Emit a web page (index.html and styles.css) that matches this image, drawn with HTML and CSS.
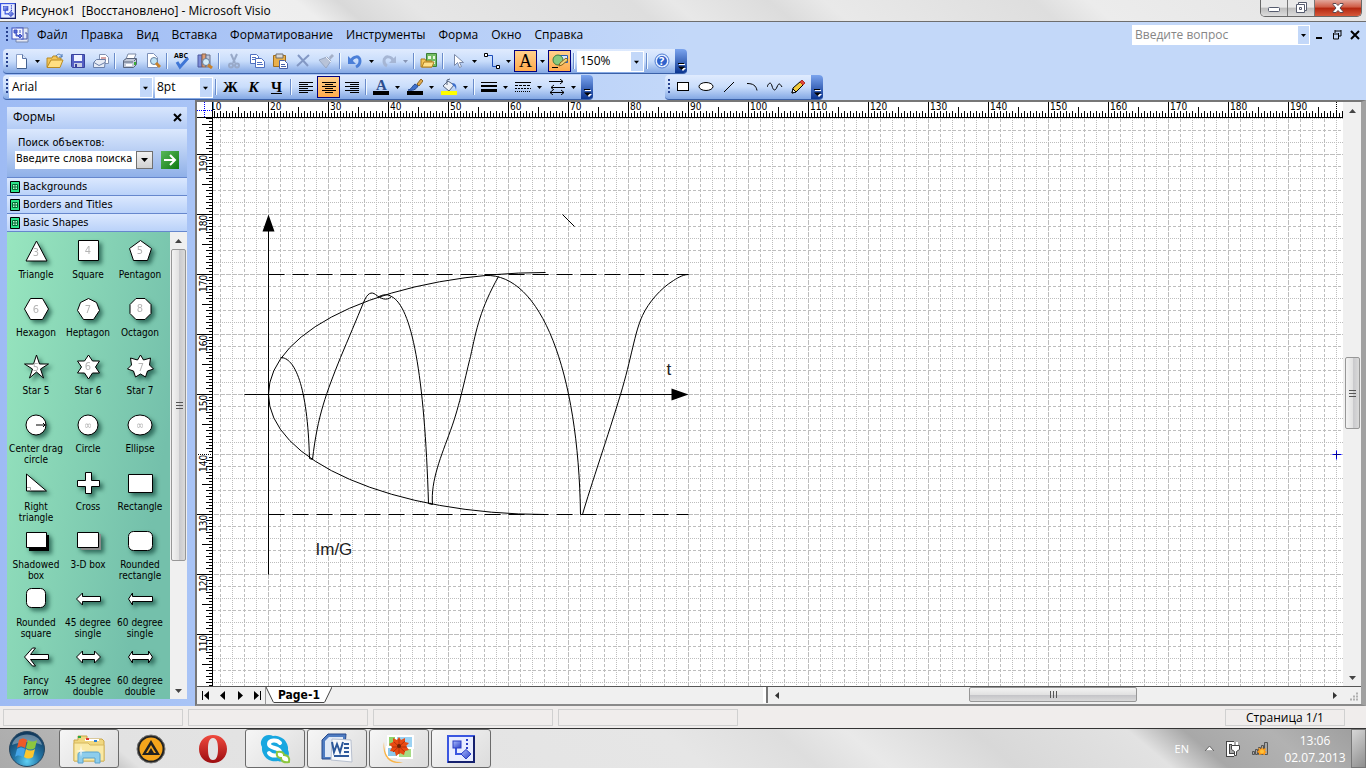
FILE: index.html
```
<!DOCTYPE html>
<html lang="ru">
<head>
  <meta charset="UTF-8">
  <meta name="viewport" content="width=device-width, initial-scale=1.0">
  <title>Рисунок1 [Восстановлено] - Microsoft Visio</title>
  <link rel="stylesheet" href="styles.css">
</head>
<body>
  <!-- shared symbols -->
  <svg class="defs" width="0" height="0" aria-hidden="true">
    <defs>
      <linearGradient id="blueBox" x1="0" y1="0" x2="1" y2="1"><stop offset="0" stop-color="#a9bcff"/><stop offset="1" stop-color="#2b3fc4"/></linearGradient>
      <symbol id="visio" viewBox="0 0 28 28">
        <rect x="1" y="1" width="26" height="26" fill="#e8edff" stroke="#3a56e0" stroke-width="2"/>
        <path d="M1 27H27V1" fill="none" stroke="#15206e" stroke-width="2"/>
        <path d="M9 11V19H18" fill="none" stroke="#3a56e0" stroke-width="2"/>
        <rect x="6" y="6" width="8" height="7" fill="url(#blueBox)" stroke="#2b3fc4"/>
        <path d="M19 14.500l5 4.500-5 5-5-5z" fill="url(#blueBox)" stroke="#2b3fc4"/>
        <path d="M20 4v10" stroke="#2b3fc4" stroke-width="2" stroke-dasharray="2 2"/>
      </symbol>
      <symbol id="down" viewBox="0 0 5 3"><path d="M0 0h5L2.500 3z"/></symbol>
      <symbol id="more" viewBox="0 0 9 9"><path d="M2 2.500h6" stroke="#fff"/><path d="M3 6h6L6 9z" fill="#fff"/><path d="M1 1.500h6" stroke="#000"/><path d="M1 4.500h7L4.500 8z"/></symbol>
      <symbol id="grip" viewBox="0 0 8 8"><path d="M1.500 0v7M4.500 0v7M7.500 0v7" stroke="#555"/></symbol>
    </defs>
  </svg>

  <header class="title-bar">
    <svg class="app-icon" width="16" height="16"><use href="#visio"/></svg>
    <h1>Рисунок1&nbsp; [Восстановлено] - Microsoft Visio</h1>
    <div class="window-buttons">
      <button class="win-btn" aria-label="Свернуть"><svg width="14" height="12"><rect x="1.500" y="5.500" width="11" height="4" rx="1" fill="#fff" stroke="#555b6e"/></svg></button>
      <button class="win-btn" aria-label="Восстановить"><svg width="14" height="14"><path d="M4.500 1.500h8v8h-2v2h-8v-8h2z" fill="#fff" stroke="#555b6e"/><path d="M4.500 3.500h6v6M5.500 6.500h2v2h-2z" fill="none" stroke="#555b6e"/></svg></button>
      <button class="win-btn close" aria-label="Закрыть"><svg width="14" height="12"><path d="M2 1.500h3l2 2 2-2h3v1l-3 3.500 3 3.500v1H9l-2-2-2 2H2v-1L5 6 2 2.500z" fill="#fff" stroke="#5b4a52"/></svg></button>
    </div>
  </header>

  <nav class="menu-bar">
    <span class="handle"></span>
    <svg class="doc-icon" width="18" height="16"><path d="M5 1h12v14H5z" fill="#e4e8f4" stroke="#7687ac"/><path d="M14 6h2v6h-6" fill="none" stroke="#4052a8"/><rect x="1" y="1" width="11" height="11" fill="#f5f7ff" stroke="#3c50c0"/><path d="M3 3h3v3H3zM5 6v3h3M9 3v3M9 7l2 2-2 2-2-2z" fill="#5a6cd8" stroke="#3c50c0"/></svg>
    <ul>
      <li><a href="#">Файл</a></li>
      <li><a href="#">Правка</a></li>
      <li><a href="#">Вид</a></li>
      <li><a href="#">Вставка</a></li>
      <li><a href="#">Форматирование</a></li>
      <li><a href="#">Инструменты</a></li>
      <li><a href="#">Форма</a></li>
      <li><a href="#">Окно</a></li>
      <li><a href="#">Справка</a></li>
    </ul>
    <div class="ask">
      <input type="text" placeholder="Введите вопрос" aria-label="Введите вопрос">
      <button aria-label="Список вопросов"><svg width="5" height="3"><use href="#down"/></svg></button>
    </div>
    <div class="doc-buttons">
      <button aria-label="Свернуть документ"><svg width="10" height="10"><path d="M2 8h6" stroke="#000" stroke-width="2"/></svg></button>
      <button aria-label="Восстановить документ"><svg width="10" height="10"><path d="M3 1h6M3 0v3M9 0v6H7M1 4h6M1.500 3v6h5V3" fill="none" stroke="#000"/></svg></button>
      <button aria-label="Закрыть документ"><svg width="10" height="10"><path d="M1 1l8 8M9 1L1 9" stroke="#000" stroke-width="2"/></svg></button>
    </div>
  </nav>

  <div class="toolbar-row">
    <div class="toolbar">
      <span class="handle"></span>
      <button class="tool" aria-label="Создать"><svg width="16" height="16"><path d="M3.500 1.500h6l4 4v10h-10z" fill="#fff" stroke="#8ba0c8"/><path d="M9.500 1.500v4h4" fill="#dbe5f7" stroke="#5c76a8"/><path d="M13.500 6v9.500H4" fill="none" stroke="#43618f"/></svg></button>
      <button class="drop" aria-label="Варианты создания"><svg width="5" height="3"><use href="#down"/></svg></button>
      <button class="tool" aria-label="Открыть"><svg width="18" height="16"><path d="M1 14V5h5l1-2h4v2h4v3" fill="#f3c558" stroke="#b88a22"/><path d="M1 14.500L5 7h12l-3 7.500z" fill="#ffdf82" stroke="#b88a22"/><path d="M10 3c2-3 5-2 6 1M16 1v3h-3" fill="none" stroke="#4b79b8"/></svg></button>
      <button class="tool" aria-label="Сохранить"><svg width="16" height="16"><path d="M1.500 1.500h13v13h-12l-1-1z" fill="#5560c4" stroke="#39429c"/><path d="M4 2h8v6H4z" fill="#eef2ff"/><path d="M4 10h8v4H4z" fill="#c9cfe4"/><path d="M5 11h2v3H5z" fill="#39429c"/></svg></button>
      <button class="tool" aria-label="Отправить"><svg width="16" height="16"><path d="M6.500 1.500h6l3 3v6h-9z" fill="#fff" stroke="#8191b0"/><path d="M8 5h5M8 7h5" stroke="#b24b4b"/><path d="M.5 9.500l3-3h9l-1 8H.5z" fill="#e6ebf5" stroke="#6a7fa8"/><path d="M1 9.500l5 3 6-3" fill="none" stroke="#6a7fa8"/></svg></button>
      <span class="sep"></span>
      <button class="tool" aria-label="Печать"><svg width="16" height="16"><path d="M4 6l2-5h8l-2 5" fill="#fff" stroke="#7c8aa5"/><path d="M1.500 7.500l3-2h10v6l-3 3h-10z" fill="#c3cad8" stroke="#59657d"/><path d="M2 9h9M12 8l2-2" stroke="#59657d"/><path d="M4 12h6" stroke="#fff" stroke-width="2"/><path d="M12 9h2v3h-2z" fill="#39ad36"/></svg></button>
      <button class="tool" aria-label="Предварительный просмотр"><svg width="16" height="16"><path d="M2.500.5h6l4 4v10h-10z" fill="#fff" stroke="#7d90b8"/><circle cx="9" cy="8" r="3.500" fill="#bfe3f5" stroke="#6680a0"/><path d="M11 10l4 4" stroke="#c8822a" stroke-width="3"/></svg></button>
      <span class="sep"></span>
      <button class="tool" aria-label="Орфография"><svg width="18" height="18"><text class="abc" x="1" y="6">ABC</text><path d="M4 10l3 5 8-9" fill="none" stroke="#3f76d6" stroke-width="3"/></svg></button>
      <button class="tool" aria-label="Справочные материалы"><svg width="16" height="16"><path d="M1 2h4v12H1z" fill="#7d8dd8" stroke="#4d599d"/><path d="M5 1h4v13H5z" fill="#dd9c74" stroke="#87644f"/><path d="M9 2h4v12H9z" fill="#bfc8dc" stroke="#68738d"/><circle cx="9" cy="9" r="3.500" fill="#d5edf8" stroke="#617b9d"/><path d="M11 12l4 3" stroke="#c8822a" stroke-width="3"/></svg></button>
      <span class="sep"></span>
      <button class="tool" aria-label="Вырезать"><svg width="16" height="16" fill="none" stroke="#98a9c8" stroke-width="2"><path d="M5 1l4 9M11 1L7 10"/><circle cx="5" cy="12.500" r="2"/><circle cx="11" cy="12.500" r="2"/></svg></button>
      <button class="tool" aria-label="Копировать"><svg width="16" height="16" fill="#fff" stroke="#4f70c0"><path d="M1.500 1.500h6l2 2v7h-8z"/><path d="M3 4.500h4M3 6.500h4"/><path d="M6.500 5.500h6l3 3v6h-9z"/><path d="M8 9.500h5M8 11.500h6"/></svg></button>
      <button class="tool" aria-label="Вставить"><svg width="16" height="16"><path d="M1.500 2.500h12v11h-12z" fill="#e9b04b" stroke="#a06d1d"/><path d="M4 1h7v4H4z" fill="#d8d8d8" stroke="#6f6f6f"/><path d="M7.500 7.500h5l3 3v5h-8z" fill="#fff" stroke="#4761a6"/><path d="M9 11.500h4M9 13.500h5" stroke="#4761a6"/></svg></button>
      <button class="tool" aria-label="Удалить"><svg width="16" height="16"><path d="M3 2l10 11M14 2L2 13" stroke="#8398c4" stroke-width="2"/></svg></button>
      <button class="tool" aria-label="Формат по образцу"><svg width="16" height="16"><path d="M11 4l3-3 2 2-4 4z" fill="#a4b0c8"/><path d="M1 7l8-3 4 4-5 7z" fill="#b8c3d8" stroke="#98a7c2"/><path d="M8 4l5 5" stroke="#eff3fa"/></svg></button>
      <span class="sep"></span>
      <button class="tool" aria-label="Отменить"><svg width="16" height="16"><path d="M4 8c2-5 9-6 9 0 0 3-2 5-4 6" fill="none" stroke="#4b7fd8" stroke-width="3"/><path d="M1 3v8h8z" fill="#4b7fd8"/></svg></button>
      <button class="drop" aria-label="Список отмены"><svg width="5" height="3"><use href="#down"/></svg></button>
      <button class="tool" aria-label="Вернуть"><svg width="16" height="16"><path d="M12 8C11 3 3 2 3 8c0 3 1 4 3 5" fill="none" stroke="#a6b6d4" stroke-width="3"/><path d="M15 3v7H8z" fill="#a6b6d4"/></svg></button>
      <button class="drop dim" aria-label="Список возврата"><svg width="5" height="3"><use href="#down"/></svg></button>
      <span class="sep"></span>
      <button class="tool" aria-label="Фигуры"><svg width="18" height="16"><path d="M6.500.5h10v13h-10z" fill="#73bd65" stroke="#3b7d37"/><path d="M8 3h3v3H8zM13 3h2v3h-2zM12 8h3v3h-3z" fill="#e6f7dd"/><path d="M1 14V6h4l1 2h6v6z" fill="#f3c558" stroke="#b07e1f"/><path d="M2 14l2-5h10l-2 5z" fill="#ffe08a" stroke="#b07e1f"/></svg></button>
      <span class="sep"></span>
      <button class="tool" aria-label="Указатель"><svg width="16" height="16"><path d="M4.500 1.500v11l3-3 2 5 2-1-2-4h4z" fill="#fff" stroke="#7a89a8"/></svg></button>
      <button class="drop" aria-label="Варианты указателя"><svg width="5" height="3"><use href="#down"/></svg></button>
      <button class="tool" aria-label="Соединитель"><svg width="18" height="18"><path d="M4 3.500h5.500v11h5" fill="none" stroke="#1b4bb8"/><path d="M1.500 1.500h3v3h-3zM13.500 13.500h3v3h-3z" fill="#fff" stroke="#000"/></svg></button>
      <button class="drop" aria-label="Варианты соединителя"><svg width="5" height="3"><use href="#down"/></svg></button>
      <button class="tool active serif" aria-label="Текст">A</button>
      <button class="drop" aria-label="Варианты текста"><svg width="5" height="3"><use href="#down"/></svg></button>
      <button class="tool active" aria-label="Инструменты рисования"><svg width="18" height="16"><path d="M6.500 2.500h10v7h-10z" fill="#dbe8ff" stroke="#2b5fb0"/><circle cx="7" cy="7" r="5" fill="#86c97e" stroke="#3a8048"/><path d="M8 13l1-3 6-5 2 2-6 5z" fill="#f2d27a" stroke="#8a6420"/><path d="M1 14.500h6" stroke="#000"/></svg></button>
      <span class="sep"></span>
      <select class="combo zoom" aria-label="Масштаб"><option>150%</option></select>
      <span class="sep"></span>
      <button class="tool" aria-label="Справка"><svg width="16" height="16"><circle cx="8" cy="8" r="7" fill="#e4edff" stroke="#4f7cd0"/><circle cx="8" cy="8" r="5" fill="#2f62cc"/><text class="q" x="5" y="12">?</text></svg></button>
      <button class="more" aria-label="Параметры панели"><svg width="9" height="9"><use href="#more"/></svg></button>
    </div>
  </div>

  <div class="toolbar-row">
    <div class="toolbar">
      <span class="handle"></span>
      <select class="combo font" aria-label="Шрифт"><option>Arial</option></select>
      <select class="combo size" aria-label="Размер шрифта"><option>8pt</option></select>
      <span class="sep"></span>
      <button class="tool serif bold" aria-label="Полужирный">Ж</button>
      <button class="tool serif bold italic" aria-label="Курсив">К</button>
      <button class="tool serif bold under" aria-label="Подчеркнутый">Ч</button>
      <span class="sep"></span>
      <button class="tool" aria-label="По левому краю"><svg width="14" height="12"><path d="M0 1.500h14M0 3.500h9M0 5.500h14M0 7.500h9M0 9.500h14M0 11.500h9" stroke="#000"/></svg></button>
      <button class="tool active" aria-label="По центру"><svg width="14" height="12"><path d="M0 1.500h14M3 3.500h8M0 5.500h14M3 7.500h8M0 9.500h14M3 11.500h8" stroke="#000"/></svg></button>
      <button class="tool" aria-label="По правому краю"><svg width="14" height="12"><path d="M0 1.500h14M5 3.500h9M0 5.500h14M5 7.500h9M0 9.500h14M5 11.500h9" stroke="#000"/></svg></button>
      <span class="sep"></span>
      <button class="tool" aria-label="Цвет текста"><svg width="16" height="18"><text class="letter" x="3" y="12">A</text><path d="M0 13h16v4H0z"/></svg></button>
      <button class="drop" aria-label="Выбор цвета текста"><svg width="5" height="3"><use href="#down"/></svg></button>
      <button class="tool" aria-label="Цвет линии"><svg width="16" height="18"><path d="M10 6l4-5 2 2-4 5z" fill="#e0aa50" stroke="#8a6424"/><path d="M1 12c3 0 4-4 7-6l3 2c-2 4-6 5-10 4z" fill="#3f70cc" stroke="#25498e"/><path d="M0 13h16v4H0z"/></svg></button>
      <button class="drop" aria-label="Выбор цвета линии"><svg width="5" height="3"><use href="#down"/></svg></button>
      <button class="tool" aria-label="Цвет заливки"><svg width="16" height="18"><path d="M2 8l5-5 6 4-5 6z" fill="#eef2f8" stroke="#56657f"/><path d="M6 7V2l3-1" fill="none" stroke="#56657f"/><path d="M11 5c4 0 5 3 4 7-1-3-1-4-3-4z" fill="#3f70cc"/><path d="M0 13h16v4H0z" fill="#ff0"/></svg></button>
      <button class="drop" aria-label="Выбор цвета заливки"><svg width="5" height="3"><use href="#down"/></svg></button>
      <span class="sep"></span>
      <button class="tool" aria-label="Толщина линии"><svg width="16" height="12"><path d="M0 1.500h16" stroke="#000"/><path d="M0 5h16" stroke="#000" stroke-width="2"/><path d="M0 9.500h16" stroke="#000" stroke-width="3"/></svg></button>
      <button class="drop" aria-label="Выбор толщины"><svg width="5" height="3"><use href="#down"/></svg></button>
      <button class="tool" aria-label="Тип линии"><svg width="16" height="12" stroke="#000"><path d="M0 1.500h16"/><path d="M0 4.500h16" stroke-dasharray="3 1"/><path d="M0 7.500h16" stroke-dasharray="2 1"/><path d="M0 10.500h16" stroke-dasharray="1 1"/></svg></button>
      <button class="drop" aria-label="Выбор типа линии"><svg width="5" height="3"><use href="#down"/></svg></button>
      <button class="tool" aria-label="Концы линий"><svg width="16" height="16" fill="none" stroke="#000"><path d="M0 2.500h14M11 0l3 2.500-3 2.500M2 8.500h14M5 6L2 8.500 5 11M1 13.500h14M4 11l-3 2.500L4 16M12 11l3 2.500-3 2.500"/></svg></button>
      <button class="drop" aria-label="Выбор концов"><svg width="5" height="3"><use href="#down"/></svg></button>
      <button class="more" aria-label="Параметры панели"><svg width="9" height="9"><use href="#more"/></svg></button>
    </div>
    <div class="toolbar drawing-tools">
      <span class="handle"></span>
      <button class="tool" aria-label="Прямоугольник"><svg width="16" height="16"><rect x="2.500" y="3.500" width="11" height="8" fill="#fff" stroke="#000"/></svg></button>
      <button class="tool" aria-label="Эллипс"><svg width="16" height="16"><ellipse cx="8" cy="7.500" rx="7" ry="4" fill="#fff" stroke="#000"/></svg></button>
      <button class="tool" aria-label="Линия"><svg width="16" height="16"><path d="M3 13L13 3" stroke="#000"/></svg></button>
      <button class="tool" aria-label="Дуга"><svg width="16" height="16"><path d="M3 4.500c6 0 9 2 10 7" fill="none" stroke="#000"/></svg></button>
      <button class="tool" aria-label="Кривая"><svg width="16" height="16"><path d="M0 8c2-5 4-5 5-1s3 6 5 1 3-3 5 0" fill="none" stroke="#000"/></svg></button>
      <button class="tool" aria-label="Карандаш"><svg width="16" height="16"><path d="M2 14l1-5 8-7 3 3-8 8z" fill="#f2cb3b" stroke="#000"/><path d="M2 14l1-4 3 3z" fill="#fff" stroke="#000"/><path d="M10 3l2-2 3 3-2 2z" fill="#e2473c" stroke="#b03028"/></svg></button>
      <button class="more" aria-label="Параметры панели"><svg width="9" height="9"><use href="#more"/></svg></button>
    </div>
  </div>

  <main>
    <aside class="shapes-panel">
      <div class="panel-title">
        <h2>Формы</h2>
        <button aria-label="Закрыть панель"><svg width="9" height="9"><path d="M1 1l7 7M8 1L1 8" stroke="#000" stroke-width="2"/></svg></button>
      </div>
      <form class="search" onsubmit="return false">
        <label for="shape-search">Поиск объектов:</label>
        <div class="search-line">
          <input type="text" id="shape-search" value="Введите слова поиска">
          <button type="button" class="list-btn" aria-label="Список запросов"><svg width="7" height="4"><path d="M0 0h7L3.500 4z"/></svg></button>
          <button class="go" aria-label="Найти"><svg width="18" height="18"><path d="M3 9h11M9 4l5 5-5 5" fill="none" stroke="#fff" stroke-width="2"/></svg></button>
        </div>
      </form>
      <button class="stencil"><svg width="10" height="12"><path d="M.5.500h9v11h-9z" fill="#2be48a" stroke="#000"/><path d="M2.500 3.500h5v5h-5zM5 3v6M2 6h6" fill="#b8ffd8" stroke="#006a30"/></svg>Backgrounds</button>
      <button class="stencil"><svg width="10" height="12"><path d="M.5.500h9v11h-9z" fill="#2be48a" stroke="#000"/><path d="M2.500 3.500h5v5h-5zM5 3v6M2 6h6" fill="#b8ffd8" stroke="#006a30"/></svg>Borders and Titles</button>
      <button class="stencil"><svg width="10" height="12"><path d="M.5.500h9v11h-9z" fill="#2be48a" stroke="#000"/><path d="M2.500 3.500h5v5h-5zM5 3v6M2 6h6" fill="#b8ffd8" stroke="#006a30"/></svg>Basic Shapes</button>
      <div class="stencil-body">
        <ul class="shapes">
          <li><svg viewBox="0 0 40 34"><path d="M20.500 7L31 27H10z"/><text x="20" y="22">3</text></svg>Triangle</li>
          <li><svg viewBox="0 0 40 34"><path d="M10.500 6.500h20v20h-20z"/><text x="20" y="20">4</text></svg>Square</li>
          <li><svg viewBox="0 0 40 34"><path d="M20.500 6.500l11 8-4 12h-14l-4-12z"/><text x="20" y="20">5</text></svg>Pentagon</li>
          <li><svg viewBox="0 0 40 34"><path d="M14.500 6.500h12l6 10.500-6 10.500h-12L8.500 17z"/><text x="20" y="21">6</text></svg>Hexagon</li>
          <li><svg viewBox="0 0 40 34"><path d="M20.500 6.500l8 4 3 8-6 9h-10l-6-9 3-8z"/><text x="20" y="21">7</text></svg>Heptagon</li>
          <li><svg viewBox="0 0 40 34"><path d="M16 6.500h9l6 6v9l-6 6h-9l-6-6v-9z"/><text x="20" y="20">8</text></svg>Octagon</li>
          <li><svg viewBox="0 0 40 34"><path d="M20.500 5l3 9h9l-8 5 3 9-7-6-7 6 3-9-8-5h9z"/><text x="20" y="21">5</text></svg>Star 5</li>
          <li><svg viewBox="0 0 40 34"><path d="M20.500 5l4 6h7l-4 6 4 6h-7l-4 6-4-6h-7l4-6-4-6h7z"/><text x="20" y="20">6</text></svg>Star 6</li>
          <li><svg viewBox="0 0 40 34"><path d="M20.500 5l3 5 7-2-1 7 4 4-6 2-2 6-5-3-5 3-2-6-6-2 4-4-1-7 7 2z"/><text x="21" y="21">7</text></svg>Star 7</li>
          <li><svg viewBox="0 0 40 34"><circle cx="20" cy="17" r="10"/><path d="M20 17h10M27 15l2 2-2 2"/></svg>Center drag circle</li>
          <li><svg viewBox="0 0 40 34"><circle cx="20" cy="17" r="10"/><text x="20" y="21">∞</text></svg>Circle</li>
          <li><svg viewBox="0 0 40 34"><ellipse cx="20" cy="17" rx="12" ry="10"/><text x="20" y="21">∞</text></svg>Ellipse</li>
          <li><svg viewBox="0 0 40 34"><path d="M10.500 8v17h20z"/><path class="faint" d="M11 21.500h3.500v3"/></svg>Right triangle</li>
          <li><svg viewBox="0 0 40 34"><path d="M17.500 6.500h6v8h8v6h-8v7h-6v-7h-8v-6h8z"/></svg>Cross</li>
          <li><svg viewBox="0 0 40 34"><path d="M8.500 8.500h24v18h-24z"/></svg>Rectangle</li>
          <li><svg viewBox="0 0 40 34"><path class="solid" d="M13 11h20v16H13z"/><path d="M10.500 8.500h20v15h-20z"/></svg>Shadowed box</li>
          <li><svg viewBox="0 0 40 34"><path class="solid grey" d="M11 10h22v16H13z"/><path d="M9.500 8.500h21v15h-21z"/></svg>3-D box</li>
          <li><svg viewBox="0 0 40 34"><rect x="8.500" y="7.500" width="24" height="19" rx="5"/></svg>Rounded rectangle</li>
          <li><svg viewBox="0 0 40 34"><rect x="10.500" y="6.500" width="19" height="19" rx="5"/></svg>Rounded square</li>
          <li><svg viewBox="0 0 40 34"><path d="M8.500 17l6-6v3.500h18v5h-18V23z"/></svg>45 degree single</li>
          <li><svg viewBox="0 0 40 34"><path d="M8.500 17l4-6v3.500h20v5h-20V23z"/></svg>60 degree single</li>
          <li><svg viewBox="0 0 40 34"><path d="M8.500 17l8-9h3l-5 6.500h18v5h-18l5 6.500h-3z"/></svg>Fancy<br>arrow</li>
          <li><svg viewBox="0 0 40 34"><path d="M8.500 17l6-6v3.500h12V11l6 6-6 6v-3.500h-12V23z"/></svg>45 degree double</li>
          <li><svg viewBox="0 0 40 34"><path d="M8.500 17l4-6v3.500h16V11l4 6-4 6v-3.500h-16V23z"/></svg>60 degree double</li>
        </ul>
        <div class="vscroll">
          <button aria-label="Вверх"><svg width="7" height="4"><path d="M0 4h7L3.500 0z"/></svg></button>
          <div class="track"><div class="thumb stencil-thumb"><svg width="8" height="8"><use href="#grip"/></svg></div></div>
          <button aria-label="Вниз"><svg width="7" height="4"><path d="M0 0h7L3.500 4z"/></svg></button>
        </div>
      </div>
    </aside>

    <section class="drawing-window">
      <div class="drawing-grid">
        <svg class="corner" width="16" height="16"><path d="M0 8.500h16M7.500 0v16" stroke="#00f" stroke-dasharray="1 1"/></svg>

        <svg class="ruler top-ruler">
          <defs>
            <pattern id="ticksX" x="55" y="0" width="60" height="16" patternUnits="userSpaceOnUse">
              <path d="M.5 0v16M30.500 5v11" stroke="#000"/>
              <path d="M6.500 9v7M12.500 9v7M18.500 9v7M24.500 9v7M36.500 9v7M42.500 9v7M48.500 9v7M54.500 9v7" stroke="#000"/>
              <path d="M3.500 11v5M9.500 11v5M15.500 11v5M21.500 11v5M27.500 11v5M33.500 11v5M39.500 11v5M45.500 11v5M51.500 11v5M57.500 11v5" stroke="#000"/>
            </pattern>
          </defs>
          <rect width="100%" height="16" fill="url(#ticksX)"/>
          <g>
            <text x="-3" y="8">10</text><text x="57" y="8">20</text><text x="117" y="8">30</text><text x="177" y="8">40</text>
            <text x="237" y="8">50</text><text x="297" y="8">60</text><text x="357" y="8">70</text><text x="417" y="8">80</text>
            <text x="477" y="8">90</text><text x="537" y="8">100</text><text x="597" y="8">110</text><text x="657" y="8">120</text>
            <text x="717" y="8">130</text><text x="777" y="8">140</text><text x="837" y="8">150</text><text x="897" y="8">160</text>
            <text x="957" y="8">170</text><text x="1017" y="8">180</text><text x="1077" y="8">190</text>
          </g>
          <path d="M1123.500 0v16" stroke="#000" stroke-dasharray="1 1"/>
          <path d="M0 15.500h4000" stroke="#000"/>
        </svg>

        <svg class="ruler left-ruler">
          <defs>
            <pattern id="ticksY" x="0" y="36" width="16" height="60" patternUnits="userSpaceOnUse">
              <path d="M0 .5h16M5 30.500h11" stroke="#000"/>
              <path d="M9 6.500h7M9 12.500h7M9 18.500h7M9 24.500h7M9 36.500h7M9 42.500h7M9 48.500h7M9 54.500h7" stroke="#000"/>
              <path d="M12 3.500h4M12 9.500h4M12 15.500h4M12 21.500h4M12 27.500h4M12 33.500h4M12 39.500h4M12 45.500h4M12 51.500h4M12 57.500h4" stroke="#000"/>
            </pattern>
          </defs>
          <rect width="16" height="100%" fill="url(#ticksY)"/>
          <g>
            <text transform="translate(10 54) rotate(-90)">190</text>
            <text transform="translate(10 114) rotate(-90)">180</text>
            <text transform="translate(10 174) rotate(-90)">170</text>
            <text transform="translate(10 234) rotate(-90)">160</text>
            <text transform="translate(10 294) rotate(-90)">150</text>
            <text transform="translate(10 354) rotate(-90)">140</text>
            <text transform="translate(10 414) rotate(-90)">130</text>
            <text transform="translate(10 474) rotate(-90)">120</text>
            <text transform="translate(10 534) rotate(-90)">110</text>
          </g>
          <path d="M0 336.500h16" stroke="#fff" stroke-dasharray="1 1"/>
          <path d="M15.500 0v4000" stroke="#000"/>
        </svg>

        <!-- drawing, origin of the inner group is the crossing of the axes -->
        <svg class="canvas" role="img" aria-label="График Im/G от t">
          <defs>
            <pattern id="grid" x="55" y="36" width="60" height="60" patternUnits="userSpaceOnUse">
              <g fill="none" stroke="#bdbdbd">
                <path d="M0 .5h60M.5 0v60" stroke-dasharray="5 1"/>
                <path d="M0 12.500h60M0 36.500h60M12.500 0v60M36.500 0v60" stroke-dasharray="3 2"/>
                <path d="M0 24.500h60M0 48.500h60M24.500 0v60M48.500 0v60" stroke-dasharray="1 1"/>
              </g>
            </pattern>
          </defs>
          <rect width="100%" height="100%" fill="url(#grid)"/>
          <g transform="translate(55.500 276.500)" fill="none" stroke="#000">
            <path d="M-24 0H404M0-164V180"/>
            <path d="M420 0l-17-6v12zM0-180l-6 17H6z" fill="#000" stroke="none"/>
            <path d="M0-120H420M0 120H420" stroke-dasharray="16 8"/>
            <path d="M0 0A277 122 0 0 1 277-122M0 0A277 120 0 0 0 277 120"/>
            <path d="M12-37C26-37 39-10 41 64L44 65C49 21 58-2 72-37C80-56 88-75 95-92C99-102 103-103 107-100C112-96 118-93 123-98"/>
            <path d="M109-97C115-101 120-100 123-98C143-88 156-22 160 109L164 110C162 86 173 61 182 36C191 12 198-23 202-38C208-66 212-86 230-118"/>
            <path d="M217-119C272-121 310-24 312 120H314C322 92 340 40 352 0C363-36 366-62 374-79C380-92 392-106 405-114C411-118 416-120 420-120"/>
            <path d="M294-180l12 12"/>
            <text class="label" x="398" y="-20">t</text>
            <text class="label" x="47" y="160">Im/G</text>
            <path d="M1064 60h9M1068 56v9" stroke="#00f"/>
            <path d="M1066 60h5M1068 58v5" stroke="#00008b"/>
          </g>
        </svg>

        <div class="vscroll page-vscroll">
          <button aria-label="Вверх"><svg width="7" height="4"><path d="M0 4h7L3.500 0z"/></svg></button>
          <div class="track"><div class="thumb page-thumb"><svg width="8" height="8"><use href="#grip"/></svg></div></div>
          <button aria-label="Вниз"><svg width="7" height="4"><path d="M0 0h7L3.500 4z"/></svg></button>
        </div>
      </div>

      <div class="page-bar">
        <div class="page-nav">
          <button aria-label="Первая страница"><svg width="8" height="9"><path d="M0 0h1v9H0zM7 0v9L2 4.500z"/></svg></button>
          <button aria-label="Предыдущая страница"><svg width="8" height="9"><path d="M6 0v9L1 4.500z"/></svg></button>
          <button aria-label="Следующая страница"><svg width="8" height="9"><path d="M2 0v9l5-4.500z"/></svg></button>
          <button aria-label="Последняя страница"><svg width="8" height="9"><path d="M7 0h1v9H7zM1 0v9l5-4.500z"/></svg></button>
        </div>
        <a class="page-tab" href="#">
          <svg width="8" height="16"><path d="M0 0l8 16V0z" fill="#fff"/><path d="M0 0l7.500 15.500" stroke="#444"/></svg><span>Page-1</span><svg width="8" height="16"><path d="M8 0L0 16V0z" fill="#fff"/><path d="M8 0L.5 15.500" stroke="#444"/></svg>
        </a>
        <span class="splitter"></span>
        <div class="hscroll">
          <button aria-label="Влево"><svg width="4" height="7"><path d="M4 0v7L0 3.500z"/></svg></button>
          <div class="htrack"><div class="hthumb"><svg width="8" height="8"><use href="#grip"/></svg></div></div>
          <button aria-label="Вправо"><svg width="4" height="7"><path d="M0 0v7l4-3.500z"/></svg></button>
        </div>
        <svg class="size-grip" width="18" height="16"><path d="M7 12.500h9M10 9.500h6M13 6.500h3" stroke="#b0b0b0" stroke-width="2" stroke-dasharray="2 1"/></svg>
      </div>
    </section>
  </main>

  <footer class="status-bar">
    <span></span><span></span><span></span><span></span>
    <span class="page-count">Страница 1/1</span>
  </footer>

  <div class="taskbar">
    <button class="start" aria-label="Пуск">
      <svg width="38" height="38" viewBox="0 0 38 38">
        <defs><radialGradient id="orb" cx=".5" cy=".85" r=".8"><stop offset="0" stop-color="#5fd0f4"/><stop offset=".45" stop-color="#2377a8"/><stop offset="1" stop-color="#123a5e"/></radialGradient></defs>
        <circle cx="19" cy="19" r="17.500" fill="url(#orb)" stroke="#27465f"/>
        <path d="M4 15C7 1 31 1 34 15 25 11 13 11 4 15z" fill="#fff" opacity=".35"/>
        <path d="M11 10c3-2 5-2 8 0l-2 8c-3-2-5-2-8 0z" fill="#ee5a28"/>
        <path d="M20 10c3 2 6 2 9 0l-2 8c-3 2-6 2-9 0z" fill="#8cc63e"/>
        <path d="M9 19c3-2 5-2 8 0l-2 8c-3-2-6-2-8 0z" fill="#45a5e8"/>
        <path d="M18 19c3 2 6 2 9 0l-2 8c-3 2-6 2-9 0z" fill="#fcc62e"/>
      </svg>
    </button>
    <button class="task open" aria-label="Проводник">
      <svg width="34" height="32" viewBox="0 0 34 32">
        <path d="M2 7h4V3h9v3h15l2 2v20H2z" fill="#f0d77f" stroke="#c9a64a"/>
        <path d="M6 3h3v2H6z" fill="#28a745"/><path d="M13 6h14v2H13z" fill="#fff"/><path d="M14 5h3v2h-3z" fill="#d33"/><path d="M22 7h3v2h-3z" fill="#2b7fd4"/>
        <path d="M2 10h14l2 2h14v16H2z" fill="#fae9a4" stroke="#d6b85e"/>
        <path d="M6 30V22c0-2 1-3 3-3h16c2 0 3 1 3 3v8h-5v-5H11v5z" fill="#8dcdec" stroke="#5aa2cc"/>
        <path d="M9 12l1 5 4 1-4 1-1 5-1-5-4-1 4-1z" fill="#fff" opacity=".7"/>
      </svg>
    </button>
    <button class="task" aria-label="AIMP">
      <svg width="32" height="32" viewBox="0 0 32 32">
        <circle cx="16" cy="16" r="14" fill="#222" stroke="#777"/><circle cx="16" cy="16" r="11.500" fill="#f6a51c"/>
        <path d="M16 7l9 15H7z" fill="#222"/><path d="M16 12l5 8H11z" fill="#f6a51c"/><path d="M16 15l3 5h-6z" fill="#222"/>
      </svg>
    </button>
    <button class="task" aria-label="Opera">
      <svg width="32" height="32" viewBox="0 0 32 32">
        <defs><linearGradient id="opera" x1="0" y1="0" x2="0" y2="1"><stop offset="0" stop-color="#f04a3e"/><stop offset="1" stop-color="#9c0d10"/></linearGradient></defs>
        <path fill-rule="evenodd" d="M16 2C8 2 2 8 2 16s6 14 14 14 14-6 14-14S24 2 16 2zm0 3c4 0 5 5 5 11s-1 11-5 11-5-5-5-11 1-11 5-11z" fill="url(#opera)"/>
      </svg>
    </button>
    <button class="task open" aria-label="Skype">
      <svg width="32" height="32" viewBox="0 0 32 32">
        <path d="M10 2a8 8 0 0 0-7 12A13 13 0 0 0 19 28a8 8 0 0 0 10-11A13 13 0 0 0 14 3 8 8 0 0 0 10 2z" fill="#18a7e0"/>
        <path d="M21 10c-3-4-11-3-11 1 0 5 11 3 11 8 0 4-8 5-11 1" fill="none" stroke="#fff" stroke-width="4" stroke-linecap="round"/>
        <path d="M18 19c5-1 7 1 7 3 4 0 6 3 5 7-5 1-8-1-8-4-3 0-5-2-4-6z" fill="#fff" stroke="#8cc63e" stroke-width="2"/>
      </svg>
    </button>
    <button class="task open" aria-label="Word">
      <svg width="32" height="32" viewBox="0 0 32 32">
        <path d="M1 7l6-6h18l-2 25H1z" fill="#4f7cc2" stroke="#27498b"/><path d="M4 8l4-4h14v20H4z" fill="#dfe8f6"/>
        <path d="M11 6l19 1 1 22-21-2z" fill="#f7f9fc" stroke="#b8c0cf"/>
        <path d="M23 11h5M23 15h5M23 19h5M13 23h15" stroke="#2b579a" stroke-width="2"/>
        <path d="M11 9l2 10 3-8 3 8 3-10" fill="none" stroke="#2b579a" stroke-width="2"/>
      </svg>
    </button>
    <button class="task open" aria-label="Picture Manager">
      <svg width="32" height="32" viewBox="0 0 32 32">
        <path d="M5 3h11v13H5z" fill="#8ed36c" stroke="#fff" stroke-width="2"/><path d="M15 14h14v11H15z" fill="#a5dc84" stroke="#fff" stroke-width="2"/><path d="M4 14h11v10H4z" fill="#8cc8ec" stroke="#fff" stroke-width="2"/>
        <path d="M13 3h17v12H13z" fill="#9bd2f3" stroke="#fff" stroke-width="2"/>
        <path d="M16 4l2 3 4-2v4l4 1-3 3 3 4-4 1-1 4-4-2-4 3-1-4-5-1 2-4-3-3 4-2v-4l4 2z" fill="#e84a12"/><path d="M16 6v15M9 14h15M11 9l11 10M22 8L10 19" stroke="#b5330a"/><circle cx="16" cy="13" r="2" fill="#6d2207"/>
        <path d="M1 9c0 14 6 21 19 20-10 4-22-3-19-20z" fill="#f9b448"/>
      </svg>
    </button>
    <button class="task open" aria-label="Visio"><svg width="28" height="28"><use href="#visio"/></svg></button>

    <div class="tray">
      <span class="lang">EN</span>
      <svg width="9" height="5"><path d="M0 5h9L4.500 0z" fill="#fff" stroke="#666"/></svg>
      <svg width="16" height="16"><path d="M9 2H3v12h6" fill="none" stroke="#444" stroke-width="4"/><path d="M9 2H3v12h6" fill="none" stroke="#fff" stroke-width="2"/><path d="M8 1v4M12 1v4" stroke="#fff" stroke-width="2"/><path d="M6.500 4.500h8v4l-3 2v4h-2v-4l-3-2z" fill="#fff" stroke="#444"/></svg>
      <svg width="16" height="14"><path d="M.5 9.500h2v3h-2zM3.500 7.500h2v5h-2zM6.500 5.500h2v7h-2zM9.500 3.500h2v9h-2zM12.500.5h3v12h-3z" fill="#a6a6a6" stroke="#555"/><path d="M10 5l1 2 3-1-1 3 2 1-2 1 0 2-3-1-3 1v-2l-2-1 2-2-1-2 3 1z" fill="#ff9b16"/><circle cx="10" cy="9.500" r="2" fill="#ffc23a"/></svg>
      <time class="clock"><span>13:06</span><span>02.07.2013</span></time>
      <button class="show-desktop" aria-label="Свернуть все окна"></button>
    </div>
  </div>
</body>
</html>
```
FILE: styles.css
```
* {
  box-sizing: border-box;
}
body {
  display: flex;
  flex-direction: column;
  height: 100vh;
  margin: 0;
  overflow: hidden;
  font-family: "Open Sans", "Noto Sans", sans-serif;
  font-size: 12px;
  line-height: 16px;
  color: #000;
  background-color: #c3d8f9;
}
h1, h2, ul {
  margin: 0;
  padding: 0;
  font-size: 12px;
  font-weight: normal;
  list-style-type: none;
}
a {
  color: inherit;
  text-decoration: none;
}
button, input, select {
  margin: 0;
  padding: 0;
  border: none;
  background: none;
  font: inherit;
  color: inherit;
}
button {
  display: flex;
  align-items: center;
  justify-content: center;
}
svg {
  display: block;
  flex: none;
}
.defs {
  position: absolute;
}

/* title bar */
.title-bar {
  display: flex;
  flex: none;
  align-items: center;
  gap: 5px;
  height: 22px;
  border-bottom: 1px solid #6e6e6e;
  background: linear-gradient(40deg, #f4f4f4 0%, #eeeeee 23%, #d9d9d9 26%, #e6e6e6 31%, #dedede 47%, #e8e8e8 50%, #dcdcdc 57%, #e9e9e9 61%, #dedede 76%, #ececec 80%, #e4e4e4 100%);
}
.title-bar h1 {
  flex: 1;
}
.window-buttons {
  display: flex;
  align-self: flex-start;
  height: 17px;
  margin-right: 4px;
  border: 1px solid #686868;
  border-top: none;
  border-radius: 0 0 5px 5px;
  overflow: hidden;
}
.win-btn {
  width: 27px;
  border-right: 1px solid #777;
  background: linear-gradient(#e9e9e9 45%, #bdbdbd 50%, #dcdcdc);
}
.win-btn.close {
  width: 46px;
  border-right: none;
  background: linear-gradient(#e2a79b 0%, #cf5a43 45%, #b3260f 50%, #d6583a 100%);
}

/* menu */
.menu-bar {
  display: flex;
  flex: none;
  align-items: center;
  height: 26px;
  padding-left: 5px;
  background: linear-gradient(90deg, #9ebbf4, #c3d8f9 50%);
}
.handle {
  flex: none;
  width: 2px;
  height: 16px;
  margin: 0 1px 0 3px;
  background: repeating-linear-gradient(#27418e 0 2px, transparent 2px 4px);
}
.menu-bar .handle {
  margin: 0 3px 0 1px;
}
.menu-bar ul {
  display: flex;
  flex: 1;
  gap: 13px;
  padding-left: 8px;
}
.ask {
  display: flex;
  width: 178px;
  height: 20px;
  margin-right: 4px;
  padding: 1px;
  background-color: #fff;
}
.ask input {
  flex: 1;
  min-width: 0;
  padding-left: 2px;
}
.ask input::placeholder {
  color: #868686;
  opacity: 1;
}
.ask button {
  width: 11px;
  background-color: #c3d8f9;
}
.doc-buttons {
  display: flex;
  gap: 8px;
  margin-right: 6px;
}

/* toolbars */
.toolbar-row {
  display: flex;
  flex: none;
  gap: 72px;
  height: 26px;
  padding: 1px 0 0 3px;
  background: linear-gradient(90deg, #9ebbf4, #c3d8f9 50%);
}
.toolbar {
  display: flex;
  align-items: center;
  height: 25px;
  border-bottom: 1px solid #3b61a8;
  border-radius: 4px;
  background: linear-gradient(#e0ebfe 0%, #c9ddfb 50%, #84a8e4 100%);
  overflow: hidden;
}
.tool {
  flex: none;
  width: 23px;
  height: 22px;
}
.tool.active {
  border: 1px solid #000080;
  background: linear-gradient(#ffd08c, #ffab4c);
}
.drop {
  flex: none;
  width: 11px;
  height: 22px;
}
.drop.dim {
  fill: #8795b5;
}
.sep {
  flex: none;
  width: 2px;
  height: 16px;
  margin: 0 2px;
  border-left: 1px solid #6a8ccb;
  border-right: 1px solid #f1f9ff;
}
.more {
  align-self: stretch;
  align-items: flex-end;
  width: 12px;
  margin-left: 2px;
  padding-bottom: 2px;
  background: linear-gradient(#7ba4ee, #0b3590);
}
.combo {
  height: 21px;
  margin-right: 2px;
  padding-left: 1px;
  appearance: none;
  border: 1px solid #fff;
  background: url("data:image/svg+xml,%3Csvg xmlns='http://www.w3.org/2000/svg' width='12' height='20'%3E%3Cpath fill='%23c3d8f9' d='M0 0h12v20H0z'/%3E%3Cpath d='M3 9h5L5.500 12z'/%3E%3C/svg%3E") no-repeat right center #fff;
}
.combo.zoom {
  width: 67px;
  margin-right: 0;
  padding-left: 2px;
}
.combo.font {
  width: 144px;
  padding-left: 2px;
}
.combo.size {
  width: 58px;
  margin-right: 0;
}
.serif {
  font-family: "Liberation Serif", serif;
  font-size: 18px;
}
.bold {
  font-size: 15px;
  font-weight: bold;
}
.italic {
  font-style: italic;
}
.under {
  text-decoration: underline;
}
.abc {
  font-size: 7px;
  font-weight: bold;
}
.q {
  font-size: 11px;
  font-weight: bold;
  fill: #fff;
}
.letter {
  font-family: "Liberation Serif", serif;
  font-size: 15px;
  font-weight: bold;
  fill: #2d4f8f;
}

/* shapes panel */
main {
  display: flex;
  flex: 1;
  min-height: 0;
}
.shapes-panel {
  display: flex;
  flex: none;
  flex-direction: column;
  width: 195px;
  padding: 7px 8px 7px 7px;
  font-family: "DejaVu Sans Condensed", "DejaVu Sans", sans-serif;
  font-size: 11px;
  background: linear-gradient(90deg, #9ebbf4, #a9c4f6);
}
.panel-title {
  display: flex;
  align-items: center;
  justify-content: space-between;
  height: 22px;
  padding: 0 5px 2px 6px;
  background: linear-gradient(#d8e6fd, #b3cbf5);
}
.panel-title h2 {
  font-family: "Open Sans", "Noto Sans", sans-serif;
}
.search {
  height: 48px;
  padding: 6px 8px 0;
  background: linear-gradient(#dbe8fd, #8fb0e8);
}
.search label {
  display: block;
  padding-left: 3px;
}
.search-line {
  display: flex;
  height: 18px;
}
.search-line input {
  width: 121px;
  padding: 0 0 2px 1px;
  background-color: #fff;
}
.list-btn {
  width: 17px;
  border: 1px solid #707070;
  background: linear-gradient(#f2f2f2, #d0d0d0);
}
.go {
  width: 18px;
  margin-left: 8px;
  background: linear-gradient(135deg, #58b858, #0f7a12);
}
.stencil {
  justify-content: flex-start;
  gap: 3px;
  height: 18px;
  padding-left: 3px;
  border-top: 1px solid #6687cd;
  background: linear-gradient(#dbe8fe, #bad2f9);
}
.stencil-body {
  display: flex;
  flex: 1;
  min-height: 0;
  border-top: 1px solid #6687cd;
}
.shapes {
  display: grid;
  flex: 1;
  grid-template-columns: repeat(3, 52px);
  grid-auto-rows: 58px;
  padding: 2px 0 0 3px;
  font-size: 10px;
  line-height: 11px;
  text-align: center;
  background: linear-gradient(100deg, #98e6bf, #74c0ab 80%);
  overflow: hidden;
}
.shapes li {
  margin: 0 -3px;
}
.shapes svg {
  width: 40px;
  height: 34px;
  margin: 0 auto 1px;
  fill: #fff;
  stroke: #000;
  overflow: visible;
  filter: drop-shadow(3px 3px 2px rgba(0, 50, 40, 0.6));
}
.shapes text {
  fill: #b5b5b5;
  stroke: none;
  text-anchor: middle;
  font-size: 11px;
}
.shapes .faint {
  fill: none;
  stroke: #aaa;
}
.shapes .solid {
  fill: #000;
  stroke: none;
}
.shapes .grey {
  fill: #8a8a8a;
}

/* scroll bars */
.vscroll {
  display: flex;
  flex: none;
  flex-direction: column;
  width: 17px;
  background-color: #f0f0f0;
}
.vscroll button {
  height: 17px;
  fill: #444;
}
.track {
  flex: 1;
}
.thumb {
  display: flex;
  align-items: center;
  justify-content: center;
  width: 15px;
  margin: 0 auto;
  border: 1px solid #979797;
  border-radius: 2px;
  background: linear-gradient(90deg, #f3f3f3, #e2e2e2 50%, #c9c9cc 55%, #dadada);
}
.thumb svg {
  transform: rotate(90deg);
}
.stencil-thumb {
  height: 72%;
}
.page-vscroll {
  grid-area: 1 / 3 / 3 / 4;
  width: 18px;
}
.page-vscroll .track {
  padding-top: 238px;
}
.page-thumb {
  height: 72px;
}
.hscroll {
  display: flex;
  flex: 0 0 calc(50% - 7px);
}
.hscroll button {
  width: 17px;
  fill: #333;
}
.htrack {
  flex: 1;
}
.hthumb {
  display: flex;
  align-items: center;
  justify-content: center;
  width: 31%;
  height: 15px;
  margin-left: 34%;
  border: 1px solid #979797;
  border-radius: 2px;
  background: linear-gradient(#f3f3f3, #e2e2e2 50%, #c4c4c8 55%, #dadada);
}

/* drawing window */
.drawing-window {
  display: flex;
  flex: 1;
  flex-direction: column;
  min-width: 0;
  border: 2px solid #777;
  border-right: 5px solid #a0a0a0;
  border-bottom-color: #8a8a8a;
}
.drawing-grid {
  display: grid;
  flex: 1;
  grid-template-columns: 16px 1fr 18px;
  grid-template-rows: 16px 1fr;
  min-height: 0;
  background-color: #fff;
}
.corner, .ruler, .canvas {
  width: 100%;
  height: 100%;
  min-width: 0;
  min-height: 0;
  overflow: hidden;
}
.corner {
  border-right: 1px solid #000;
  border-bottom: 1px solid #000;
}
.ruler text {
  font-family: "DejaVu Sans Condensed", "DejaVu Sans", sans-serif;
  font-size: 10px;
}
.label {
  font-family: "Liberation Sans", Arial, sans-serif;
  font-size: 17px;
  fill: #222;
  stroke: none;
}
.page-bar {
  display: flex;
  flex: none;
  height: 18px;
  border-top: 1px solid #555;
  background-color: #f0f0f0;
}
.page-nav {
  display: flex;
  width: 69px;
  padding-left: 1px;
  border-right: 1px solid #999;
}
.page-nav button {
  width: 17px;
  height: 16px;
}
.page-tab {
  display: flex;
  height: 16px;
  font-family: "DejaVu Sans Condensed", "DejaVu Sans", sans-serif;
  font-weight: bold;
}
.page-tab span {
  padding: 0 4px;
  border-bottom: 1px solid #444;
  background-color: #fff;
}
.splitter {
  width: 5px;
  height: 16px;
  margin-left: auto;
  border-right: 2px solid #777;
  background-color: #fff;
}

/* status bar */
.status-bar {
  display: flex;
  flex: none;
  gap: 5px;
  height: 22px;
  padding: 3px 21px 2px 3px;
  background-color: #f0edec;
}
.status-bar span {
  width: 180px;
  border: 1px solid #d0d0d0;
}
.status-bar .page-count {
  width: 120px;
  margin-left: auto;
  text-align: center;
}

/* taskbar */
.taskbar {
  display: flex;
  flex: none;
  gap: 2px;
  height: 40px;
  border-top: 1px solid #333;
  background: linear-gradient(40deg, #aaaaaa 0%, #b4b4b4 7%, #e2e2e2 10%, #e6e6e6 50%, #dedede 58%, #e9e9e9 63%, #d8d8d8 72%, #e2e2e2 83%, #a8a8a8 87%, #b2b2b2 93%, #9c9c9c 100%);
}
.start {
  width: 57px;
  padding-right: 3px;
}
.task {
  width: 60px;
}
.task.open {
  border: 1px solid #6b6b6b;
  border-radius: 3px;
  background: linear-gradient(135deg, #f6f6f6, #dcdcdc);
}
.tray {
  display: flex;
  align-items: center;
  gap: 11px;
  margin-left: auto;
  color: #fff;
}
.lang {
  margin-right: 5px;
  font-size: 11px;
}
.clock {
  display: flex;
  flex-direction: column;
  width: 72px;
  text-align: center;
  line-height: 17px;
}
.show-desktop {
  align-self: stretch;
  width: 15px;
  margin-left: -11px;
  border: 1px solid #777;
  background: linear-gradient(135deg, #d6d6d6, #8e8e8e);
}
```
